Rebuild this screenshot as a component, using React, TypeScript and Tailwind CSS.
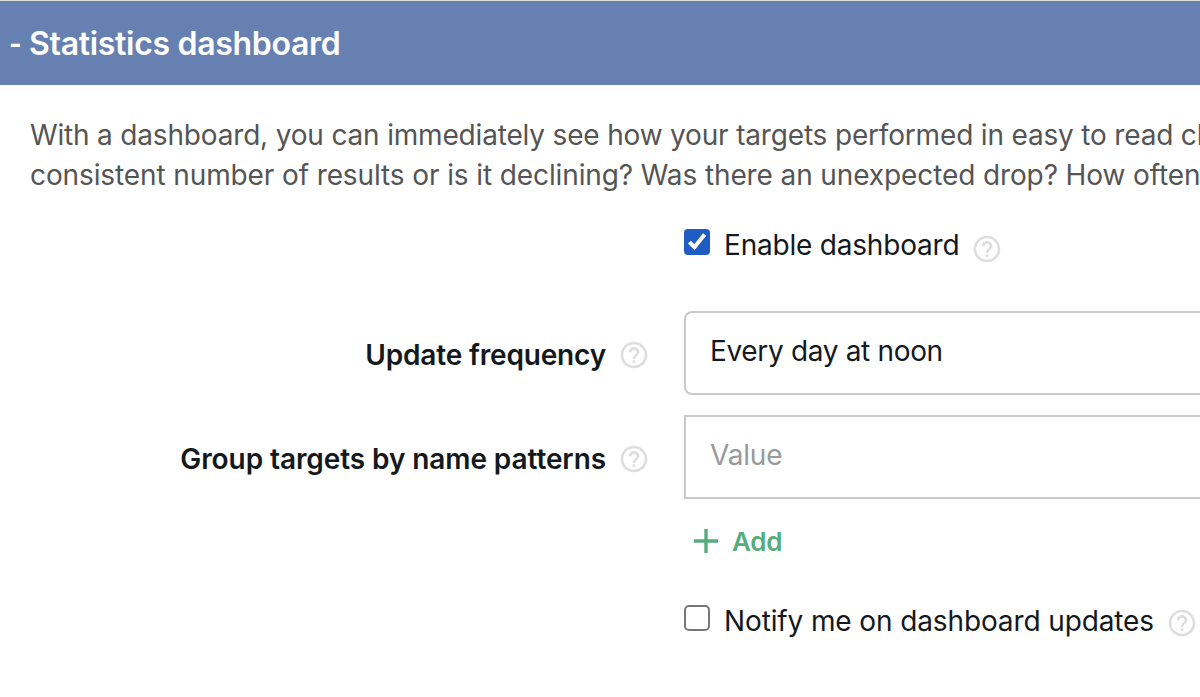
import type { ReactNode } from 'react';
import { MdHelpOutline } from 'react-icons/md';

function Help({ className = '' }: { className?: string }) {
  return <MdHelpOutline className={`size-8 shrink-0 text-[#dedede] ${className}`} />;
}

function Label({ children, tracking }: { children: ReactNode; tracking: string }) {
  return (
    <div className="flex h-[84px] w-[650px] shrink-0 items-center justify-end gap-3 pt-1">
      <span className={`whitespace-nowrap text-[28px] leading-10 font-semibold ${tracking}`}>{children}</span>
      <Help />
    </div>
  );
}

export default function App() {
  return (
    <main className="h-[697px] w-full overflow-hidden bg-white font-['Inter',sans-serif] text-[28px] leading-10 text-[#13191d]">
      <header className="flex h-[85px] items-center border-t border-[#dddddd] bg-[#6681b1] pt-0.5 pl-[9px] text-[32px] font-semibold text-white">
        <h2 className="flex tracking-[-0.3px]">
          <span className="w-5 origin-left scale-x-[0.85]">-</span>
          <span>Statistics dashboard</span>
        </h2>
      </header>

      <div className="ml-[30px] pt-[30px] whitespace-nowrap text-[#555555]">
        <p className="tracking-[-0.175px]">With a dashboard, you can immediately see how your targets performed in easy to read charts.</p>
        <p className="tracking-[-0.11px]">consistent number of results or is it declining? Was there an unexpected drop? How often</p>
      </div>

      <div className="ml-[684px] flex h-[116px] items-start pt-[30px]">
        <span className="mt-1 flex size-[26px] shrink-0 items-center justify-center rounded-[4px] bg-[#1f5dc4]">
          <svg viewBox="0 0 26 26" className="size-[26px]" fill="none" stroke="white" strokeWidth="4">
            <path d="M5.4 13.2 10.4 18.2 20.6 5.4" />
          </svg>
        </span>
        <span className="ml-[14px] tracking-[-0.2px] whitespace-nowrap">Enable dashboard</span>
        <Help className="mt-2 ml-3" />
      </div>

      <div className="flex gap-[34px]">
        <Label tracking="tracking-[-0.16px]">Update frequency</Label>
        <div className="flex h-[84px] grow items-center rounded-l-[8px] border-2 border-r-0 border-[#c9c9c9] pb-1 pl-6 tracking-[-0.33px] whitespace-nowrap">
          Every day at noon
        </div>
      </div>

      <div className="mt-5 flex gap-[34px]">
        <Label tracking="tracking-[-0.09px]">Group targets by name patterns</Label>
        <div className="flex h-[84px] grow items-center border-2 border-r-0 border-[#c9c9c9] pb-1 pl-6 tracking-[-0.2px] text-[#999999]">
          Value
        </div>
      </div>

      <div className="mt-[23px] ml-[694px] flex h-10 items-center text-[26px] font-semibold text-[#55ad7e]">
        <svg viewBox="0 0 24 24" className="mb-0.5 size-6" fill="none" stroke="currentColor" strokeWidth="3.4">
          <path d="M0 12h24M12 0v24" />
        </svg>
        <span className="ml-[14px] tracking-[-0.2px]">Add</span>
      </div>

      <div className="mt-[39px] ml-[684px] flex items-start">
        <span className="mt-1 size-[26px] shrink-0 rounded-[5px] border-2 border-[#777777] bg-white" />
        <span className="ml-[14px] tracking-[-0.12px] whitespace-nowrap">Notify me on dashboard updates</span>
        <Help className="mt-1.5 ml-3" />
      </div>
    </main>
  );
}
